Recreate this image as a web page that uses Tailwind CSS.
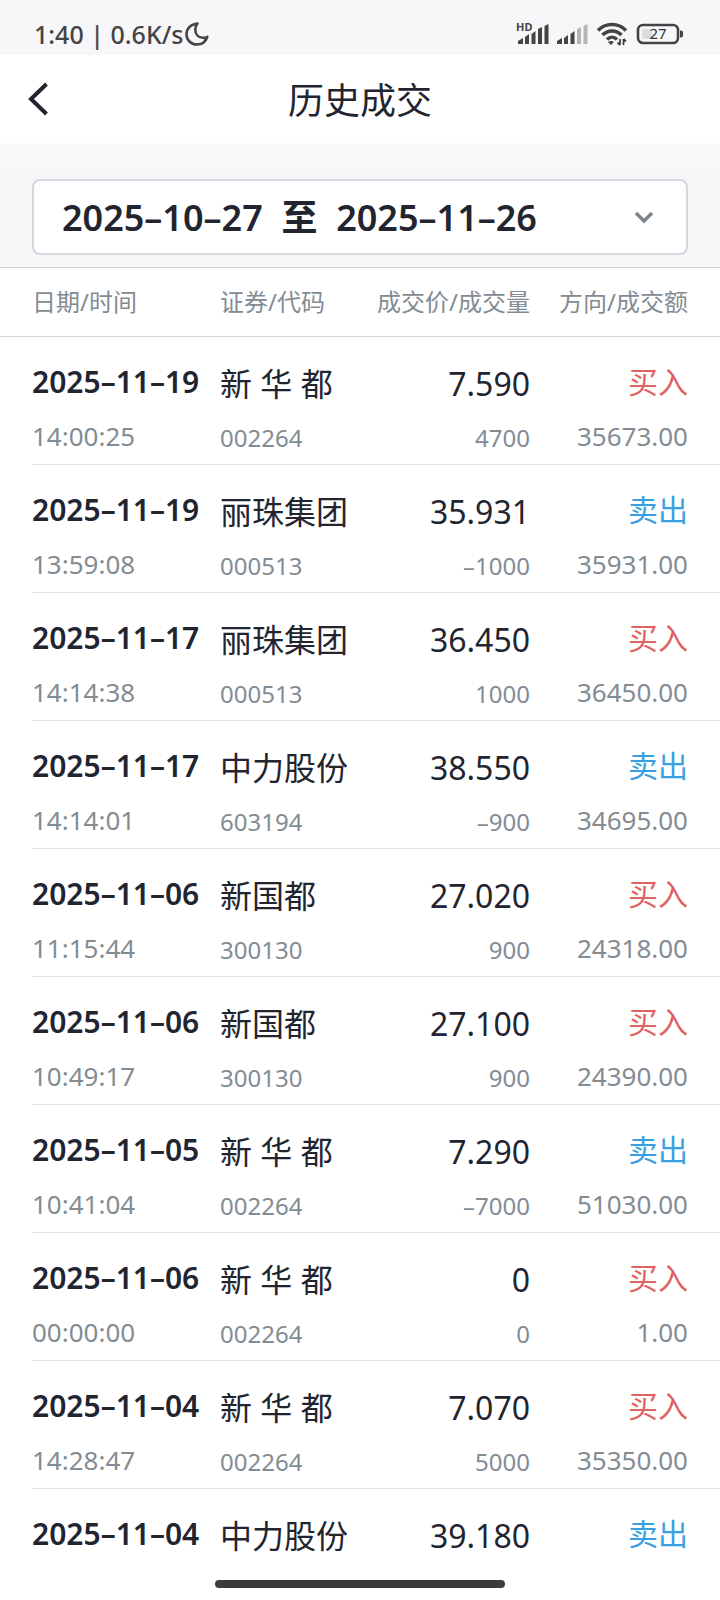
<!DOCTYPE html>
<html lang="zh-CN">

<head>
  <meta charset="UTF-8" />
  <meta name="viewport" content="width=device-width, initial-scale=1.0" />
  <title>历史成交</title>
  <script src="https://cdn.jsdelivr.net/npm/@tailwindcss/browser@4"></script>
</head>

<body class="flex flex-col h-screen overflow-hidden bg-white text-[#22252f] font-['Noto_Sans','Noto_Sans_CJK_SC',sans-serif]">
  <!-- status bar -->
  <div class="flex items-center justify-between h-[55px] shrink-0 pl-[34px] pr-9 pt-3 bg-[#f7f7fa] text-[#444]">
    <div class="flex items-center gap-0.5">
      <span class="text-[25px] leading-8 font-medium">1:40 | 0.6K/s</span>
      <svg class="size-6" viewBox="0 0 24 24" fill="none" stroke="#444" stroke-width="2.6" stroke-linejoin="round">
        <path d="M12.500 1.500C6 2 1.500 6.600 1.500 12.200c0 5.700 4.500 10.300 10.300 10.300 5 0 9-3 10.500-7.700-1.500.8-3 1.200-4.500 1-4.500-.3-7.500-3.600-7.500-8 0-2.400.8-4.600 2.200-6.300z" />
      </svg>
    </div>
    <div class="flex items-center">
      <svg class="overflow-visible" width="33" height="24" viewBox="0 0 33 24" fill="#444">
        <text x="0" y="9" font-size="11" font-weight="700" font-family="Noto Sans, sans-serif">HD</text>
        <path d="M2 22v-3l5-3v6zM9 22v-7l4-3v10zM15.500 22V12l4-3v13zM22 22V7l4-2v17zM28.500 22V4l4-2v20z" />
      </svg>
      <svg class="ml-2" width="31" height="24" viewBox="0 0 31 24" fill="#444">
        <path d="M0 22v-3l5-3v6zM7 22v-6l4-3v9zM13.500 22V12l4-3v13z" />
        <path fill="#b5b5b8" d="M20 22V7l4-2v17zM26.500 22V4l4-2v20z" />
      </svg>
      <svg class="ml-2" width="32" height="24" viewBox="0 0 32 24" fill="none" stroke="#444" stroke-width="3.500">
        <path d="M2 8.500c7.500-8 20.500-8 28 0M6.500 13c5-5.500 14-5.500 19 0M11 17.500c3-3 7-3 10 0" />
        <path fill="#444" stroke="none" d="M12 20c1.500-1.500 4.500-1.500 6 0L15 23z" />
        <path stroke-width="1.800" d="M24 17v6M21.500 20.500l2.500 2.500M27.500 23v-6M30 19.500L27.500 17" />
      </svg>
      <svg class="ml-2" width="48" height="24" viewBox="0 0 48 24">
        <rect x="2" y="3" width="40" height="18" rx="5" fill="none" stroke="#444" stroke-width="2.6" />
        <rect x="6" y="7" width="10" height="10" rx="2" fill="#dcdcdc" />
        <path d="M44 8.500c3 0 3 1 3 3.500s0 3.500-3 3.500z" fill="#444" />
        <text x="22" y="17" text-anchor="middle" font-size="15" fill="#333" font-family="Noto Sans, sans-serif">27</text>
      </svg>
    </div>
  </div>

  <!-- title bar -->
  <header class="grid grid-cols-[80px_1fr_80px] items-center h-[88px] shrink-0">
    <button aria-label="返回" class="flex items-center h-full pl-7">
      <svg width="22" height="34" viewBox="0 0 22 34" fill="none" stroke="#22252f" stroke-width="4">
        <path d="M18.500 2L3 17l15.500 15" />
      </svg>
    </button>
    <h1 class="pt-1 text-center text-[36px] leading-12">历史成交</h1>
  </header>
  <div class="h-6 shrink-0 bg-[#fafafa]"></div>

  <!-- date range -->
  <div class="relative shrink-0 px-8 py-3 border-b border-[#d3d7dd] bg-[#f7f7fa]">
    <select aria-label="日期范围"
      class="block w-full h-[76px] px-7 pt-0.5 border-2 border-[#d3d9df] rounded-lg bg-white appearance-none text-[36px] font-semibold">
      <option>2025–10–27&nbsp; 至&nbsp; 2025–11–26</option>
    </select>
    <svg class="absolute right-[66px] top-11 pointer-events-none" width="20" height="14" viewBox="0 0 20 14" fill="none" stroke="#7d868d" stroke-width="3.500">
      <path d="M2 2l8 8 8-8" />
    </svg>
  </div>

  <!-- trades -->
  <main class="flex-1 min-h-0 overflow-hidden">
    <table class="w-full table-fixed border-separate border-spacing-0">
      <colgroup>
        <col class="w-[220px]" />
        <col />
        <col class="w-[160px]" />
        <col class="w-[190px]" />
      </colgroup>
      <thead class="text-2xl text-[#838c93]">
        <tr class="h-[69px] whitespace-nowrap">
          <th class="pl-8 border-b border-[#d3d7dd] font-normal text-left">日期/时间</th>
          <th class="border-b border-[#d3d7dd] font-normal text-left">证券/代码</th>
          <th class="border-b border-[#d3d7dd] font-normal text-right">成交价/成交量</th>
          <th class="pr-8 border-b border-[#d3d7dd] font-normal text-right">方向/成交额</th>
        </tr>
      </thead>
      <tbody id="trades"></tbody>
    </table>
  </main>

  <!-- home indicator -->
  <div class="flex justify-center shrink-0 py-3">
    <div class="w-[290px] h-2 rounded-full bg-[#3c3c3c]"></div>
  </div>

  <script>
    const trades = [
      ['2025–11–19', '14:00:25', '新 华 都', '002264', '7.590', '4700', '买入', '35673.00'],
      ['2025–11–19', '13:59:08', '丽珠集团', '000513', '35.931', '–1000', '卖出', '35931.00'],
      ['2025–11–17', '14:14:38', '丽珠集团', '000513', '36.450', '1000', '买入', '36450.00'],
      ['2025–11–17', '14:14:01', '中力股份', '603194', '38.550', '–900', '卖出', '34695.00'],
      ['2025–11–06', '11:15:44', '新国都', '300130', '27.020', '900', '买入', '24318.00'],
      ['2025–11–06', '10:49:17', '新国都', '300130', '27.100', '900', '买入', '24390.00'],
      ['2025–11–05', '10:41:04', '新 华 都', '002264', '7.290', '–7000', '卖出', '51030.00'],
      ['2025–11–06', '00:00:00', '新 华 都', '002264', '0', '0', '买入', '1.00'],
      ['2025–11–04', '14:28:47', '新 华 都', '002264', '7.070', '5000', '买入', '35350.00'],
      ['2025–11–04', '', '中力股份', '', '39.180', '', '卖出', ''],
    ];

    // the divider starts at the text, so the first cell draws its own
    document.getElementById('trades').innerHTML = trades.map(([date, time, name, code, price, qty, side, amount]) => `
      <tr class="h-32 align-top whitespace-nowrap">
        <td class="relative pl-8 pt-[21px] after:absolute after:left-8 after:right-0 after:bottom-0 after:h-px after:bg-[#e2e4e6]">
          <div class="text-[30px] leading-12 font-semibold">${date}</div>
          <div class="mt-2.5 text-[26px] leading-10 text-[#838c93]">${time}</div>
        </td>
        <td class="pt-[23px] border-b border-[#e2e4e6]">
          <div class="text-[32px] leading-12">${name}</div>
          <div class="mt-2.5 text-2xl leading-10 text-[#838c93]">${code}</div>
        </td>
        <td class="pt-[23px] border-b border-[#e2e4e6] text-right">
          <div class="text-[32px] leading-12">${price}</div>
          <div class="mt-2.5 text-2xl leading-10 text-[#838c93]">${qty}</div>
        </td>
        <td class="pr-8 pt-[21px] border-b border-[#e2e4e6] text-right">
          <div class="text-[30px] leading-12 ${side === '买入' ? 'text-[#e06363]' : 'text-[#38a1e4]'}">${side}</div>
          <div class="mt-2.5 text-[26px] leading-10 text-[#838c93]">${amount}</div>
        </td>
      </tr>`).join('');
  </script>
</body>

</html>
